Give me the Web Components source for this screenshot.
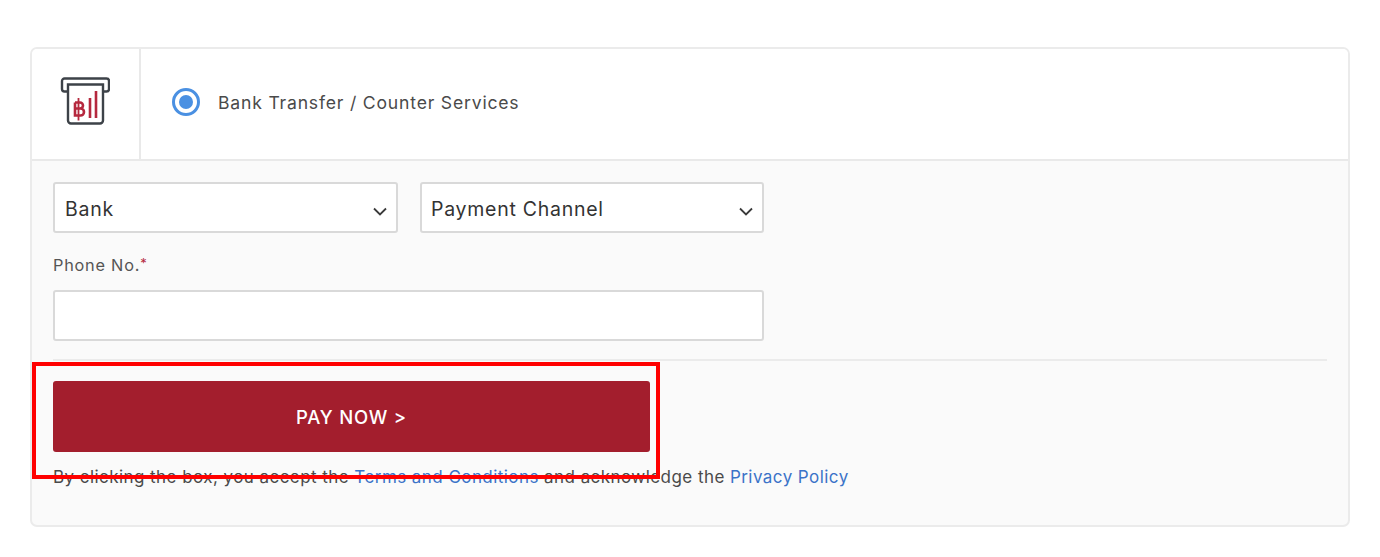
<!DOCTYPE html>
<html lang="en"><head><meta charset="utf-8"><title>Payment</title>
<style>
html,body{margin:0;background:#fff}
body{padding:47px 30px 0;font-family:Inter,"Liberation Sans",sans-serif;color:#444}
</style></head><body>
<pay-card>
  <pay-method slot="head" label="Bank Transfer / Counter Services"></pay-method>
  <div slot="selects" style="display:flex;gap:22px">
    <pay-select style="width:345px">Bank</pay-select>
    <pay-select style="width:344px;--pl:9px">Payment Channel</pay-select>
  </div>
  <pay-field slot="field" label="Phone No."></pay-field>
  <pay-button slot="button">PAY NOW &gt;</pay-button>
  <pay-terms slot="terms"></pay-terms>
</pay-card>
<script>
function def(name,html){customElements.define(name,class extends HTMLElement{
  constructor(){super();const r=this.attachShadow({mode:'open'});r.innerHTML=html;}
  connectedCallback(){const l=this.shadowRoot.querySelector('[data-label]');if(l)l.textContent=this.getAttribute('label');}
});}
def('pay-card',`<style>
:host{display:block;position:relative;box-sizing:border-box;width:1320px;height:480px;border:2px solid #ebebeb;border-radius:7px;background:#fafafa}
.head{background:#fff;border-radius:5px 5px 0 0;border-bottom:2px solid #e9e9e9;height:110px}
.body{padding:21px 21px 0}
.field{margin-top:18px}
hr{border:0;border-top:2px solid #ebebeb;margin:18px 0 20px}
.terms{margin-top:15px}
.call{position:absolute;left:0;top:313px;width:628px;height:117px;box-sizing:border-box;border:4px solid #f00;pointer-events:none}
</style>
<div class="head"><slot name="head"></slot></div>
<div class="body"><slot name="selects"></slot>
<div class="field"><slot name="field"></slot></div>
<hr>
<slot name="button"></slot>
<div class="terms"><slot name="terms"></slot></div></div>
<div class="call"></div>`);
def('pay-method',`<style>
:host{display:flex;height:100%;align-items:stretch}
.ic{width:107px;border-right:2px solid #e9e9e9;display:flex;align-items:center;justify-content:center;flex:none}
.main{display:flex;align-items:center;padding-left:31px;gap:18px;font-size:17.6px;color:#4a4a4a;padding-bottom:4px;letter-spacing:.8px}
.radio{width:28px;height:28px;box-sizing:border-box;border:3px solid #4a90e2;border-radius:50%;display:flex;align-items:center;justify-content:center}
.radio i{width:14px;height:14px;border-radius:50%;background:#4a90e2;display:block}
</style>
<div class="ic"><svg width="50" height="48" viewBox="0 0 50 48" fill="none" style="margin:0 0 6px -2px">
<path d="M8 14.500H4.500A2.500 2.500 0 0 1 2 12V4A2.500 2.500 0 0 1 4.500 1.500H46.500A2.500 2.500 0 0 1 49 4V12A2.500 2.500 0 0 1 46.500 14.500H43" stroke="#3d4248" stroke-width="2.400"/>
<path d="M8 7.500H43V43.500A3 3 0 0 1 40 46.500H11A3 3 0 0 1 8 43.500Z" stroke="#3d4248" stroke-width="2.400" fill="#fff"/>
<path d="M36 14V41M30 21V41" stroke="#b5283e" stroke-width="2.600"/>
<path d="M18.500 21V43.500" stroke="#b5283e" stroke-width="1.800"/>
<path d="M15 25.500H20A3 3 0 0 1 20 31.500H15M15 31.500H20.500A3.200 3.200 0 0 1 20.500 38.500H15V25.500" stroke="#b5283e" stroke-width="2.600"/>
</svg></div>
<div class="main"><span class="radio"><i></i></span><span data-label></span></div>`);
def('pay-select',`<style>
:host{display:flex;box-sizing:border-box;height:51px;border:2px solid #d9d9d9;border-radius:3px;background:#fff;align-items:center;justify-content:space-between;padding:0 9px 0 var(--pl,10px);font-size:19.5px;color:#333;letter-spacing:.73px}
span{padding-top:2px}
svg{margin-top:8px}
</style><span><slot></slot></span>
<svg width="14" height="9" viewBox="0 0 14 9" fill="none"><path d="M1 1.500L7 7.500L13 1.500" stroke="#3a3a3a" stroke-width="1.800"/></svg>`);
def('pay-field',`<style>
:host{display:block}
label{display:block;font-size:16.3px;color:#555;line-height:24px;margin-bottom:13px;letter-spacing:.77px}
b{color:#b5283e;font-weight:400;font-size:13px;vertical-align:3px}
.in{box-sizing:border-box;width:711px;height:51px;border:2px solid #d9d9d9;border-radius:3px;background:#fff}
</style><label><span data-label></span><b>*</b></label><div class="in"></div>`);
def('pay-button',`<style>
:host{display:flex;box-sizing:border-box;width:597px;height:71px;background:#a31e2d;border-radius:3px;color:#fff;align-items:center;justify-content:center;font-size:18.5px;font-weight:500;letter-spacing:.8px}
</style><slot></slot>`);
def('pay-terms',`<style>
:host{display:block;font-size:17px;line-height:20px;color:#4a4a4a;letter-spacing:.44px;white-space:nowrap}
a{color:#3b73c8;text-decoration:none}
</style>By clicking the box, you accept the <a href="#">Terms and Conditions</a> and acknowledge the <a href="#">Privacy Policy</a>`);
</script>
</body></html>
